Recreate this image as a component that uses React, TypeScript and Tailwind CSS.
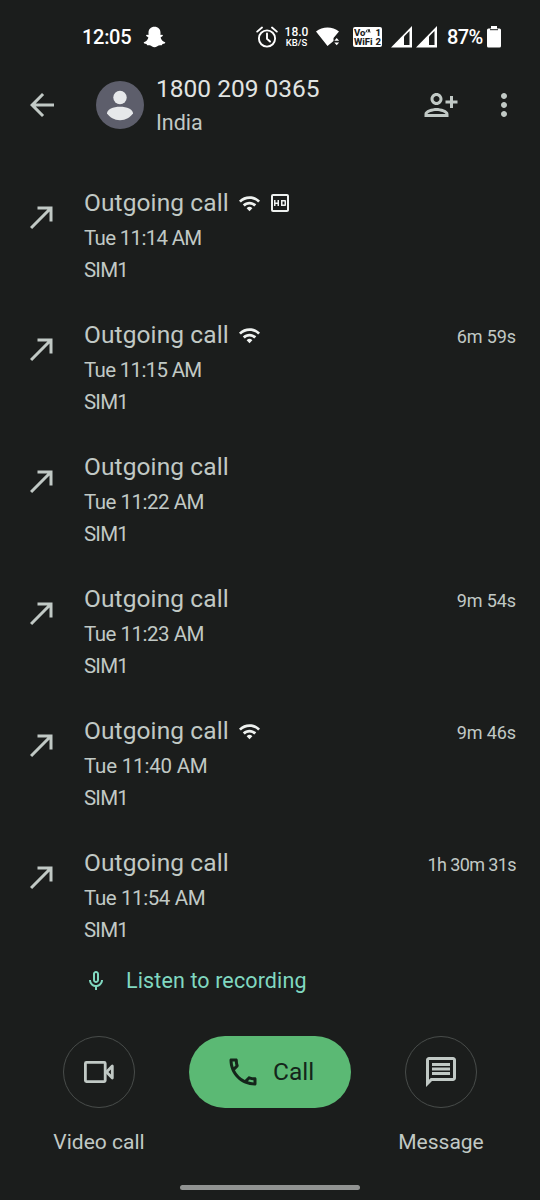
import React from 'react';
import { MdArrowBack, MdCallMade, MdMoreVert, MdOutlineCall, MdOutlineHd, MdOutlineMessage, MdOutlineMicNone, MdWifi } from 'react-icons/md';

interface CallEntry {
    time: string;
    timeClass: string;
    duration?: string;
    durationClass?: string;
    wifi?: boolean;
    hd?: boolean;
}

const calls: CallEntry[] = [
    { time: 'Tue 11:14 AM', timeClass: 'tracking-[-0.7px]', wifi: true, hd: true },
    { time: 'Tue 11:15 AM', timeClass: 'tracking-[-0.7px]', duration: '6m 59s', durationClass: 'tracking-[-0.1px]', wifi: true },
    { time: 'Tue 11:22 AM', timeClass: 'tracking-[-0.5px]' },
    { time: 'Tue 11:23 AM', timeClass: 'tracking-[-0.5px]', duration: '9m 54s', durationClass: 'tracking-[-0.1px]' },
    { time: 'Tue 11:40 AM', timeClass: 'tracking-[-0.2px]', duration: '9m 46s', durationClass: 'tracking-[-0.1px]', wifi: true },
    { time: 'Tue 11:54 AM', timeClass: 'tracking-[-0.4px]', duration: '1h 30m 31s', durationClass: 'tracking-[-0.6px]' },
];

function SignalIcon() {
    return (
        <svg width="21" height="22" viewBox="0 0 21 22" fill="none">
            <path d="M0 21.5 21 0v21.5z" fill="#fff" />
            <path d="M13 10.5 18.5 5v14H13z" fill="#1b1d1c" />
        </svg>
    );
}

function StatusBar() {
    return (
        <div className="h-[74px] flex items-center pl-[82px] text-white">
            <span className="w-[61px] text-[20px] font-medium leading-6 tracking-[-0.3px]">12:05</span>
            {/* Snapchat ghost */}
            <svg width="23" height="22" viewBox="0 0 23 22" fill="#fff">
                <path d="M11.5.8c3.7 0 6 2.5 6 6v2.3l1.5-.3c1.3.2 1.1 1.3 0 1.8l-1.4.8c.6 2.3 2.1 3.9 4.6 4.8.3 1.2-1 1.5-2.7 1.8l-.7 1.3c-2.3-.4-3.2-.1-4.5.9-1.8 1.4-3.8 1.4-5.6 0-1.3-1-2.2-1.3-4.5-.9l-.7-1.3C1.8 17.7.5 17.4.8 16.2c2.5-.9 4-2.5 4.6-4.8L4 10.6c-1.1-.5-1.3-1.6 0-1.8l1.5.3V6.8c0-3.5 2.3-6 6-6z" />
            </svg>
            <svg className="ml-[90px]" width="22" height="24" viewBox="0 0 22 24" fill="none" stroke="#fff" strokeWidth="1.9">
                <circle cx="11" cy="13.5" r="8.1" />
                <path d="M11 8.5V13.8l3 2.7M1.2 6.600 6 2.500M20.800 6.600 16 2.500" strokeLinecap="round" />
            </svg>
            <div className="ml-[6px] w-[25px] flex flex-col items-center font-medium">
                <span className="text-[12px] leading-[11px]">18.0</span>
                <span className="text-[9.5px] leading-[9px]">KB/S</span>
            </div>
            <svg className="ml-[7px]" width="24" height="20" viewBox="0 0 24 20" fill="#fff">
                <path d="M0 4.5C6.5-.9 16.5-.9 23 4.5L17.5 11v3L11.5 19z" />
                <path d="M18.3 13.8 20.7 11l2.4 2.8zM18.3 15.5h4.8l-2.4 2.8z" />
            </svg>
            <div className="ml-[13px] w-[29px] h-[20px] rounded-[2px] bg-white text-[#1b1d1c] px-px flex flex-col justify-center font-extrabold">
                <div className="flex justify-between text-[9.5px] leading-[9px]">
                    <span className="flex">
                        Vo
                        <svg width="6" height="5" viewBox="0 0 6 5" fill="none" stroke="currentColor">
                            <path d="M.8 4.5 2.3 1.5M3 4.5 4 1.2 5 4.5" />
                        </svg>
                    </span>
                    <span>1</span>
                </div>
                <div className="flex justify-between text-[9.5px] leading-[9px]">
                    <span>WiFi</span>
                    <span>2</span>
                </div>
            </div>
            <div className="ml-[9px] flex gap-[4px]">
                <SignalIcon />
                <SignalIcon />
            </div>
            <span className="ml-[10px] w-[37px] text-[20px] font-medium leading-6 tracking-[-0.6px]">87%</span>
            <svg className="ml-[3px]" width="14" height="22" viewBox="0 0 14 22" fill="#fff">
                <path d="M4 0h6v2.5h2.5A1.5 1.5 0 0 1 14 4v16a1.5 1.5 0 0 1-1.5 1.5h-11A1.5 1.5 0 0 1 0 20V4a1.5 1.5 0 0 1 1.5-1.5H4z" />
                <path d="M3 3.7h8" stroke="#1b1d1c" />
            </svg>
        </div>
    );
}

function Header() {
    return (
        <header className="h-[61px] flex items-center pl-6 pr-[18px]">
            <MdArrowBack size={36} />
            <svg className="ml-9" width="48" height="48" viewBox="0 0 48 48">
                <circle cx="24" cy="24" r="24" fill="#5d5e6b" />
                <circle cx="24" cy="16.5" r="6.7" fill="#e6e8ea" />
                <path d="M11 32.3c0-3.9 6-6.6 13-6.6s13 2.7 13 6.6c-2.5 4.2-7.3 6.9-13 6.9s-10.5-2.7-13-6.9z" fill="#e6e8ea" />
            </svg>
            <div className="ml-3 mt-[2px] flex-1 flex flex-col gap-[2px]">
                <span className="text-[24.5px] leading-8 text-[#e1e4e2]">1800 209 0365</span>
                <span className="text-[21.5px] leading-8">India</span>
            </div>
            <svg width="36" height="36" viewBox="0 0 24 24" fill="currentColor">
                <path d="M13 8c0-2.21-1.79-4-4-4S5 5.79 5 8s1.79 4 4 4 4-1.79 4-4zm-2 0c0 1.1-.9 2-2 2s-2-.9-2-2 .9-2 2-2 2 .9 2 2zM1 18v2h16v-2c0-2.66-5.33-4-8-4s-8 1.34-8 4zm2 0c.2-.71 3.3-2 6-2 2.69 0 5.77 1.28 6 2H3zM20 14v-3h3V9h-3V6h-2v3h-3v2h3v3z" />
            </svg>
            <MdMoreVert className="ml-[27px]" size={36} />
        </header>
    );
}

function CallRow({ call }: { call: CallEntry }) {
    return (
        <li className="h-[132px] flex items-start pl-6 pr-6">
            <MdCallMade className="mt-[12px] mr-6" size={36} />
            <div className="flex-1 flex flex-col">
                <div className="h-8 flex items-center">
                    <span className="w-[154px] text-[24.5px] leading-8 tracking-[0.1px] whitespace-nowrap">Outgoing call</span>
                    {call.wifi && <MdWifi size={23} className="text-[#eef1ef]" />}
                    {call.hd && <MdOutlineHd size={24} className="ml-[7px] text-[#eef1ef]" />}
                </div>
                <span className={`mt-[3px] text-[20.5px] leading-8 ${call.timeClass}`}>{call.time}</span>
                <span className="text-[20.5px] leading-[33px] tracking-[-0.8px]">SIM1</span>
            </div>
            {call.duration && (
                <span className={`mt-[2px] text-[18px] leading-8 ${call.durationClass}`}>{call.duration}</span>
            )}
        </li>
    );
}

function BottomActions() {
    return (
        <div className="mt-[39px] flex items-start justify-between px-[53px] text-[21px] leading-8">
            <div className="w-[92px] flex flex-col items-center gap-[18px]">
                <button className="size-[72px] rounded-full border border-[#484c4a] flex items-center justify-center">
                    <svg width="30" height="22" viewBox="0 0 30 22" fill="none" stroke="currentColor" strokeWidth="2.8" strokeLinejoin="round">
                        <rect x="1.4" y="1.4" width="19.8" height="19.2" rx="1" />
                        <path d="M22.5 11 28.3 5v12z" />
                    </svg>
                </button>
                <span className="whitespace-nowrap">Video call</span>
            </div>
            <button className="w-[162px] h-[72px] rounded-full bg-[#5bb974] text-[#14251a] flex items-center pl-[36px]">
                <MdOutlineCall size={36} />
                <span className="ml-[12px] text-[24.5px] leading-8">Call</span>
            </button>
            <div className="w-[92px] flex flex-col items-center gap-[18px]">
                <button className="size-[72px] rounded-full border border-[#484c4a] flex items-center justify-center">
                    <MdOutlineMessage size={36} />
                </button>
                <span>Message</span>
            </div>
        </div>
    );
}

export default function App() {
    return (
        <div className="w-[540px] h-[1200px] overflow-hidden flex flex-col bg-[#1b1d1c] text-[#c1c9c5] font-[Roboto,sans-serif]">
            <StatusBar />
            <Header />
            <ul className="mt-[52px]">
                {calls.map((call) => (
                    <CallRow key={call.time} call={call} />
                ))}
            </ul>
            {/* Recording link belongs to the last call */}
            <div className="-mt-[14px] h-8 flex items-center pl-[84px] text-[#80d8c0]">
                <MdOutlineMicNone size={24} />
                <span className="ml-[18px] text-[21.5px] leading-8 tracking-[0.12px]">Listen to recording</span>
            </div>
            <BottomActions />
            <div className="mt-auto mb-[10px] self-center w-[180px] h-[5px] rounded-full bg-[#919392]" />
        </div>
    );
}
